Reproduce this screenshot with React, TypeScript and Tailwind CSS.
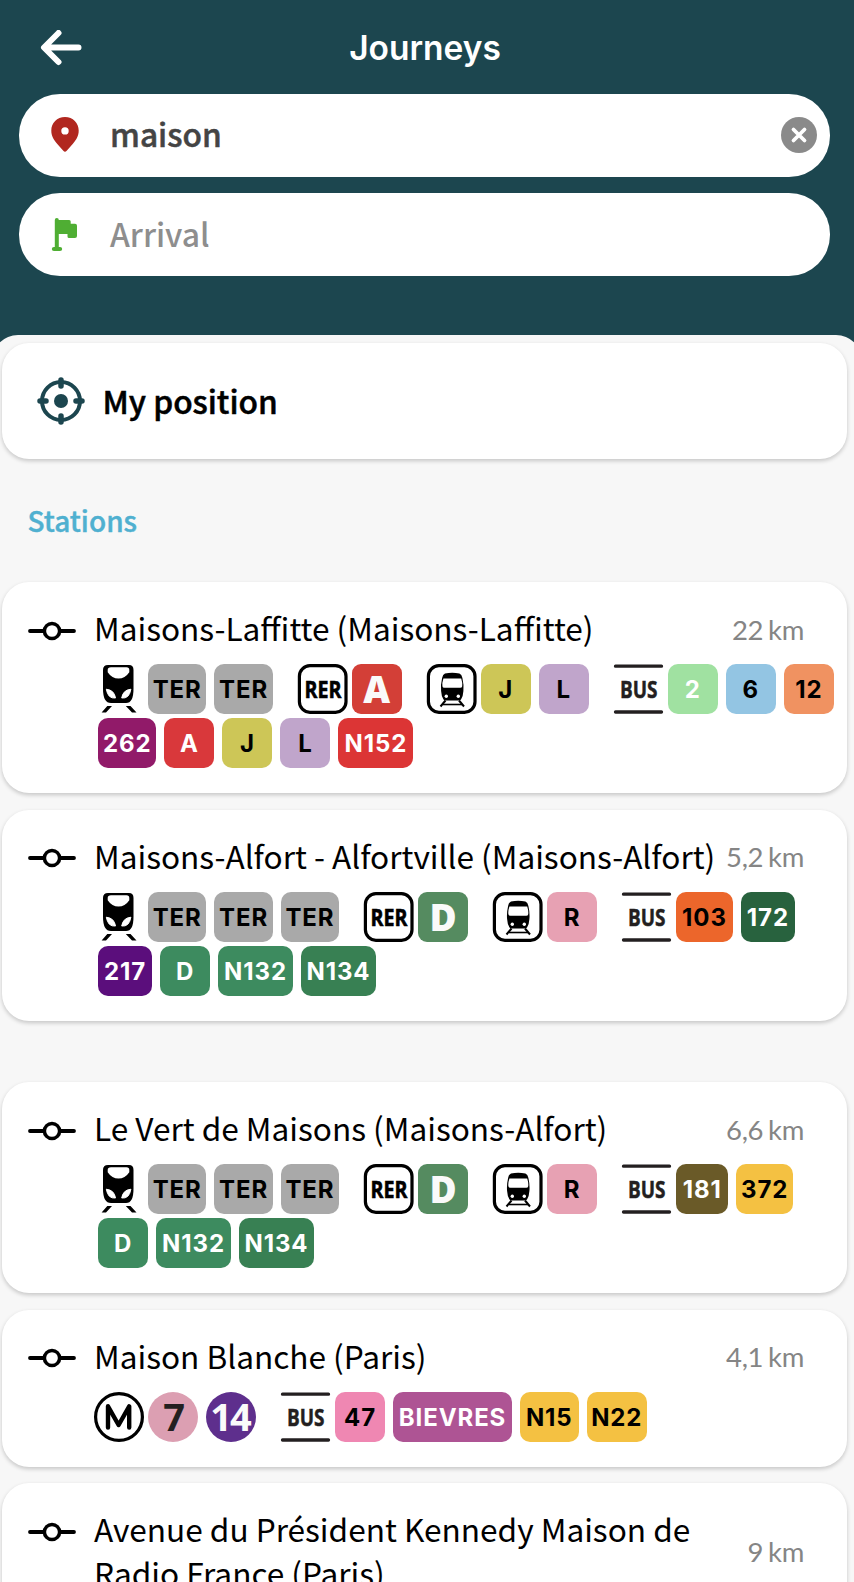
import type { ReactNode } from "react";

type Icon = "ter" | "rer" | "train" | "bus" | "metro";
type Line = { label: string; tone: string; kind?: "sign" | "disc" };
type Group = { icon: Icon; lines: Line[] };
type Station = { name: string; distance: string; box: string; groups: Group[] };

const cjk = "font-['Noto_Sans_CJK_SC','Noto_Sans',sans-serif]";

const ter: Line = { label: "TER", tone: "w-[58.4px] bg-[#a9a9a9] text-black" };
const lineJ: Line = { label: "J", tone: "w-[50px] bg-[#cdc657] text-black" };
const lineL: Line = { label: "L", tone: "w-[50px] bg-[#c0a5cb] text-black" };
const lineR: Line = { label: "R", tone: "w-[50px] bg-[#e7a1b3] text-black" };
const signA: Line = { label: "A", tone: "bg-[#d33f37]", kind: "sign" };
const signD: Line = { label: "D", tone: "bg-[#558b60]", kind: "sign" };
const lineD: Line = { label: "D", tone: "w-[50px] bg-[#3d8b5f] text-white" };
const n132: Line = { label: "N132", tone: "w-[75px] bg-[#3d8b5f] text-white" };
const n134: Line = { label: "N134", tone: "w-[75px] bg-[#388053] text-white" };

const stations: Station[] = [
  {
    name: "Maisons-Laffitte (Maisons-Laffitte)",
    distance: "22 km",
    box: "h-[211px]",
    groups: [
      { icon: "ter", lines: [ter, ter] },
      { icon: "rer", lines: [signA] },
      { icon: "train", lines: [lineJ, lineL] },
      {
        icon: "bus",
        lines: [
          { label: "2", tone: "w-[50px] bg-[#a0e1a1] text-white" },
          { label: "6", tone: "w-[50px] bg-[#93c5e3] text-black" },
          { label: "12", tone: "w-[50px] bg-[#f09261] text-black" },
          { label: "262", tone: "w-[58.4px] bg-[#911a69] text-white" },
          { label: "A", tone: "w-[50px] bg-[#d9383b] text-white" },
          lineJ,
          lineL,
          { label: "N152", tone: "w-[75px] bg-[#dc3535] text-white" },
        ],
      },
    ],
  },
  {
    name: "Maisons-Alfort - Alfortville (Maisons-Alfort)",
    distance: "5,2 km",
    box: "mt-[16.5px] h-[211px]",
    groups: [
      { icon: "ter", lines: [ter, ter, ter] },
      { icon: "rer", lines: [signD] },
      { icon: "train", lines: [lineR] },
      {
        icon: "bus",
        lines: [
          { label: "103", tone: "w-[56.5px] bg-[#ec662b] text-black" },
          { label: "172", tone: "w-[54.5px] bg-[#28623e] text-white" },
          { label: "217", tone: "w-[54px] bg-[#5b0e7c] text-white" },
          lineD,
          n132,
          n134,
        ],
      },
    ],
  },
  {
    name: "Le Vert de Maisons (Maisons-Alfort)",
    distance: "6,6 km",
    box: "mt-[61.5px] h-[211px]",
    groups: [
      { icon: "ter", lines: [ter, ter, ter] },
      { icon: "rer", lines: [signD] },
      { icon: "train", lines: [lineR] },
      {
        icon: "bus",
        lines: [
          { label: "181", tone: "w-[52px] bg-[#6a5a28] text-white" },
          { label: "372", tone: "w-[57px] bg-[#f4c142] text-black" },
          lineD,
          n132,
          n134,
        ],
      },
    ],
  },
  {
    name: "Maison Blanche (Paris)",
    distance: "4,1 km",
    box: "mt-[16.5px] h-[157px]",
    groups: [
      {
        icon: "metro",
        lines: [
          { label: "7", tone: "bg-[#dc9fb2] text-[#231f20]", kind: "disc" },
          { label: "14", tone: "bg-[#5e2f8d] pr-[2px] text-[#fafafa]", kind: "disc" },
        ],
      },
      {
        icon: "bus",
        lines: [
          { label: "47", tone: "w-[50px] bg-[#ef87b2] text-black" },
          { label: "BIEVRES", tone: "w-[119px] bg-[#ae5494] text-white" },
          { label: "N15", tone: "w-[58.5px] bg-[#f4c142] text-black" },
          { label: "N22", tone: "w-[60.5px] bg-[#f4c142] text-black" },
        ],
      },
    ],
  },
  {
    name: "Avenue du Président Kennedy Maison de Radio France (Paris)",
    distance: "9 km",
    box: "mt-[16.5px] h-[211px]",
    groups: [],
  },
];

const signFont = "font-['Open_Sans','Noto_Sans',sans-serif] font-bold";

function ModeIcon({ icon }: { icon: Icon }) {
  const cls = "block h-[50px] w-[50px] shrink-0 overflow-visible";
  if (icon === "ter")
    return (
      <svg viewBox="0 0 50 50" className={cls}>
        <path d="M14 1h21q4.500 0 4.500 5v19q0 14-7.500 14H17Q9 39 9 25V6q0-5 5-5z" fill="#000" />
        <path d="M17 3.200h15.500q2.800 0 2.800 2.600v2.400Q31 14.600 24.500 14.600T13.700 8.200V5.800q0-2.600 3.300-2.600z" fill="#fff" />
        <path d="M12.300 25.200q8 .8 9.200 8.800-7.500 1-9.200-8.800zM36.900 25.200q-8 .8-9.200 8.800 7.500 1 9.200-8.800z" fill="#fff" stroke="#fff" strokeWidth="1" strokeLinejoin="round" />
        <path d="M13.300 42H18L12 48.600H7.600zM31.800 42h4.700l6 6.600H38z" fill="#000" />
      </svg>
    );
  if (icon === "rer")
    return (
      <svg viewBox="0 0 50 50" className={cls}>
        <rect x="1.400" y="1.700" width="46.600" height="46.600" rx="10.500" fill="#fff" stroke="#000" strokeWidth="3.200" />
        <text x="6.400" y="33.500" textLength="37" lengthAdjust="spacingAndGlyphs" fontSize="24" stroke="#000" strokeWidth=".6" className={signFont}>
          RER
        </text>
      </svg>
    );
  if (icon === "train")
    return (
      <svg viewBox="0 0 50 50" className={cls}>
        <rect x="1.400" y="1.700" width="46.600" height="46.600" rx="10.500" fill="#fff" stroke="#000" strokeWidth="3.200" />
        <path d="M18 9.500q7.200-1.500 14.400 0 2.300.8 3 4.500 1.600 7 1 13-.3 5.500-2.400 8.500-.8 1-2.500 1H19q-1.700 0-2.500-1-2.100-3-2.400-8.500-.6-6 1-13 .7-3.700 2.900-4.500z" fill="#000" />
        <path d="M16.400 14.500h17.800q1.500 4.500 1 7.800-.2 1.500-2 1.500H17.400q-1.800 0-2-1.500-.5-3.300 1-7.800z" fill="#fff" />
        <circle cx="19.300" cy="32.300" r="1.700" fill="#fff" />
        <circle cx="31.300" cy="32.300" r="1.700" fill="#fff" />
        <path d="M18.500 36.500l-5 6M32 36.500l5 6" stroke="#000" strokeWidth="2" />
        <path d="M16 40.500h19" stroke="#000" strokeWidth="1.600" />
      </svg>
    );
  if (icon === "bus")
    return (
      <svg viewBox="0 0 50 50" className={cls}>
        <path d="M1.500 2.200h46M1.500 48h46" stroke="#231f20" strokeWidth="3.300" strokeLinecap="round" />
        <text x="6" y="33.500" textLength="37.500" lengthAdjust="spacingAndGlyphs" fontSize="24" fill="#231f20" stroke="#231f20" strokeWidth=".5" className={signFont}>
          BUS
        </text>
      </svg>
    );
  return (
    <svg viewBox="0 0 50 50" className={cls}>
      <circle cx="25" cy="25" r="23.400" fill="#fff" stroke="#000" strokeWidth="3.200" />
      <path d="M14 35.600V14.300L24.600 33 35.200 14.300v21.300" fill="none" stroke="#000" strokeWidth="4.400" strokeLinecap="round" strokeLinejoin="round" />
    </svg>
  );
}

function Badge({ line }: { line: Line }) {
  if (line.kind === "sign")
    return (
      <span
        className={`mx-1 mb-1 flex h-[50px] w-[50px] justify-center rounded-[9px] font-['Open_Sans',sans-serif] text-[37px] leading-[49px] font-extrabold text-[#fafafa] ${line.tone}`}
      >
        {line.label}
      </span>
    );
  if (line.kind === "disc")
    return (
      <span
        className={`mx-1 mb-1 flex h-[50px] w-[50px] justify-center rounded-full font-['Open_Sans',sans-serif] text-[38px] leading-[48px] font-bold tracking-[-2px] ${line.tone}`}
      >
        {line.label}
      </span>
    );
  return (
    <span
      className={`mx-1 mb-1 flex h-[50px] justify-center rounded-[10px] font-['Inter',sans-serif] text-[24px] leading-[52px] font-bold tracking-[0.9px] whitespace-nowrap ${line.tone}`}
    >
      {line.label}
    </span>
  );
}

function Card({ box, children }: { box: string; children: ReactNode }) {
  return (
    <section
      className={`ml-[2px] w-[845px] shrink-0 rounded-[27px] bg-white shadow-[0_2px_4px_rgba(0,0,0,0.2)] ${box}`}
    >
      {children}
    </section>
  );
}

function StationCard({ station }: { station: Station }) {
  return (
    <Card box={station.box}>
      <div className="flex items-start pt-[24px] pl-[26px]">
        <svg viewBox="0 0 48 20" className="mt-[14.500px] h-[20px] w-[48px] shrink-0" fill="none" stroke="#000">
          <path d="M2 10h14M32 10h14" strokeWidth="3.800" strokeLinecap="round" />
          <circle cx="24" cy="10" r="7.600" strokeWidth="3.500" />
        </svg>
        <div className="ml-[18px] flex w-[710px] items-center justify-between">
          <h3 className={`max-w-[624px] text-[31.600px] leading-[43.5px] font-normal text-black ${cjk}`}>{station.name}</h3>
          <span className="pt-[2.500px] font-['Lato',sans-serif] text-[27.500px] leading-[41px] tracking-[-0.3px] [word-spacing:-2px] whitespace-nowrap text-[#858585]">
            {station.distance}
          </span>
        </div>
      </div>
      <div className="mt-[14.500px] ml-[92px] flex w-[753px] flex-wrap">
        {station.groups.map((group, g) => [
          <span key={`i${g}`} className={g === 0 ? "" : "ml-[21px]"}>
            <ModeIcon icon={group.icon} />
          </span>,
          ...group.lines.map((line, i) => <Badge key={`${g}-${i}`} line={line} />),
        ])}
      </div>
    </Card>
  );
}

export default function App() {
  return (
    <div className="flex h-[1582px] w-[854px] flex-col overflow-hidden bg-[#1c464f]">
      <header className="h-[334.500px] shrink-0 pt-[20px]">
        <div className="flex h-[56px] items-center">
          <svg viewBox="0 0 42 36" className="ml-[40px] h-[36px] w-[42px]" fill="none" stroke="#fff" strokeWidth="6" strokeLinecap="round" strokeLinejoin="round">
            <path d="M18.500 3L4 17.500l14.500 14.500M5 17.500h33.500" />
          </svg>
          <h1 className="flex-1 pr-[86px] text-center font-['Inter',sans-serif] text-[33.500px] leading-[40px] font-semibold text-white">
            Journeys
          </h1>
        </div>
        <div className="mt-[18px] ml-[19px] flex h-[82.500px] w-[811px] items-center rounded-[41px] bg-white">
          <svg viewBox="0 0 28 35" className="mb-[1px] ml-[32px] h-[35px] w-[28px]">
            <path fillRule="evenodd" fill="#b1271f" d="M14 0C6 0 .3 6 .3 13.500c0 6 2.700 9.500 6 13.500l6 6.800q1.700 1.800 3.400 0l6-6.800c3.300-4 6-7.500 6-13.500C27.700 6 22 0 14 0zm0 10.200a3.700 3.700 0 110 7.400 3.700 3.700 0 010-7.400z" />
          </svg>
          <span className={`mb-[4px] ml-[31px] flex-1 text-[31.700px] leading-[46px] font-medium text-[#444] [-webkit-text-stroke:0.5px_#444] ${cjk}`}>maison</span>
          <svg viewBox="0 0 36 36" className="mr-[13px] h-[36px] w-[36px]">
            <circle cx="18" cy="18" r="18" fill="#8a8a8a" />
            <path d="M12.500 12.500l11 11M23.500 12.500l-11 11" stroke="#fff" strokeWidth="3.800" strokeLinecap="round" />
          </svg>
        </div>
        <div className="mt-[16.500px] ml-[19px] flex h-[83px] w-[811px] items-center rounded-[41px] bg-white">
          <svg viewBox="0 0 27 34" className="ml-[32px] h-[34px] w-[27px]" fill="#4fae33">
            <path d="M3.800 2q0-2 2-2t2 2h10.400q1.500 0 1.500 1.500V5.800H24q2 0 2 2V18q0 2-2 2h-6q-1.500 0-1.500-1.500V16H7.800v13H9q2.200 0 2.200 2T9 33H3q-2.200 0-2.200-2T3 29h.8z" />
          </svg>
          <span className={`mb-[3px] ml-[32px] text-[31.900px] leading-[46px] font-medium text-[#8e8e8e] ${cjk}`}>Arrival</span>
        </div>
      </header>
      <main className="-mx-[8px] flex min-h-0 flex-1 flex-col overflow-hidden rounded-t-[26px] bg-[#f7f7f7] px-[8px] pt-[8.500px]">
        <Card box="h-[116px]">
          <div className="flex h-full items-center pl-[34.500px]">
            <svg viewBox="0 0 48 48" className="mb-[1px] h-[48px] w-[48px]" fill="none" stroke="#1c464f">
              <circle cx="24" cy="24" r="19" strokeWidth="4" />
              <circle cx="24" cy="24" r="7" fill="#1c464f" stroke="none" />
              <path d="M24 3v6M24 39v6M3 24h6M39 24h6" strokeWidth="5.500" strokeLinecap="round" />
            </svg>
            <span className={`mb-[3px] ml-[18px] text-[31.700px] leading-[46px] font-medium text-black [-webkit-text-stroke:0.5px_#000] ${cjk}`}>My position</span>
          </div>
        </Card>
        <h2 className={`mt-[40px] mb-[41px] ml-[27.500px] h-[42px] shrink-0 text-[28px] leading-[42px] font-medium text-[#4fb0d0] [-webkit-text-stroke:0.4px_#4fb0d0] ${cjk}`}>
          Stations
        </h2>
        {stations.map((s) => (
          <StationCard key={s.name} station={s} />
        ))}
      </main>
    </div>
  );
}
